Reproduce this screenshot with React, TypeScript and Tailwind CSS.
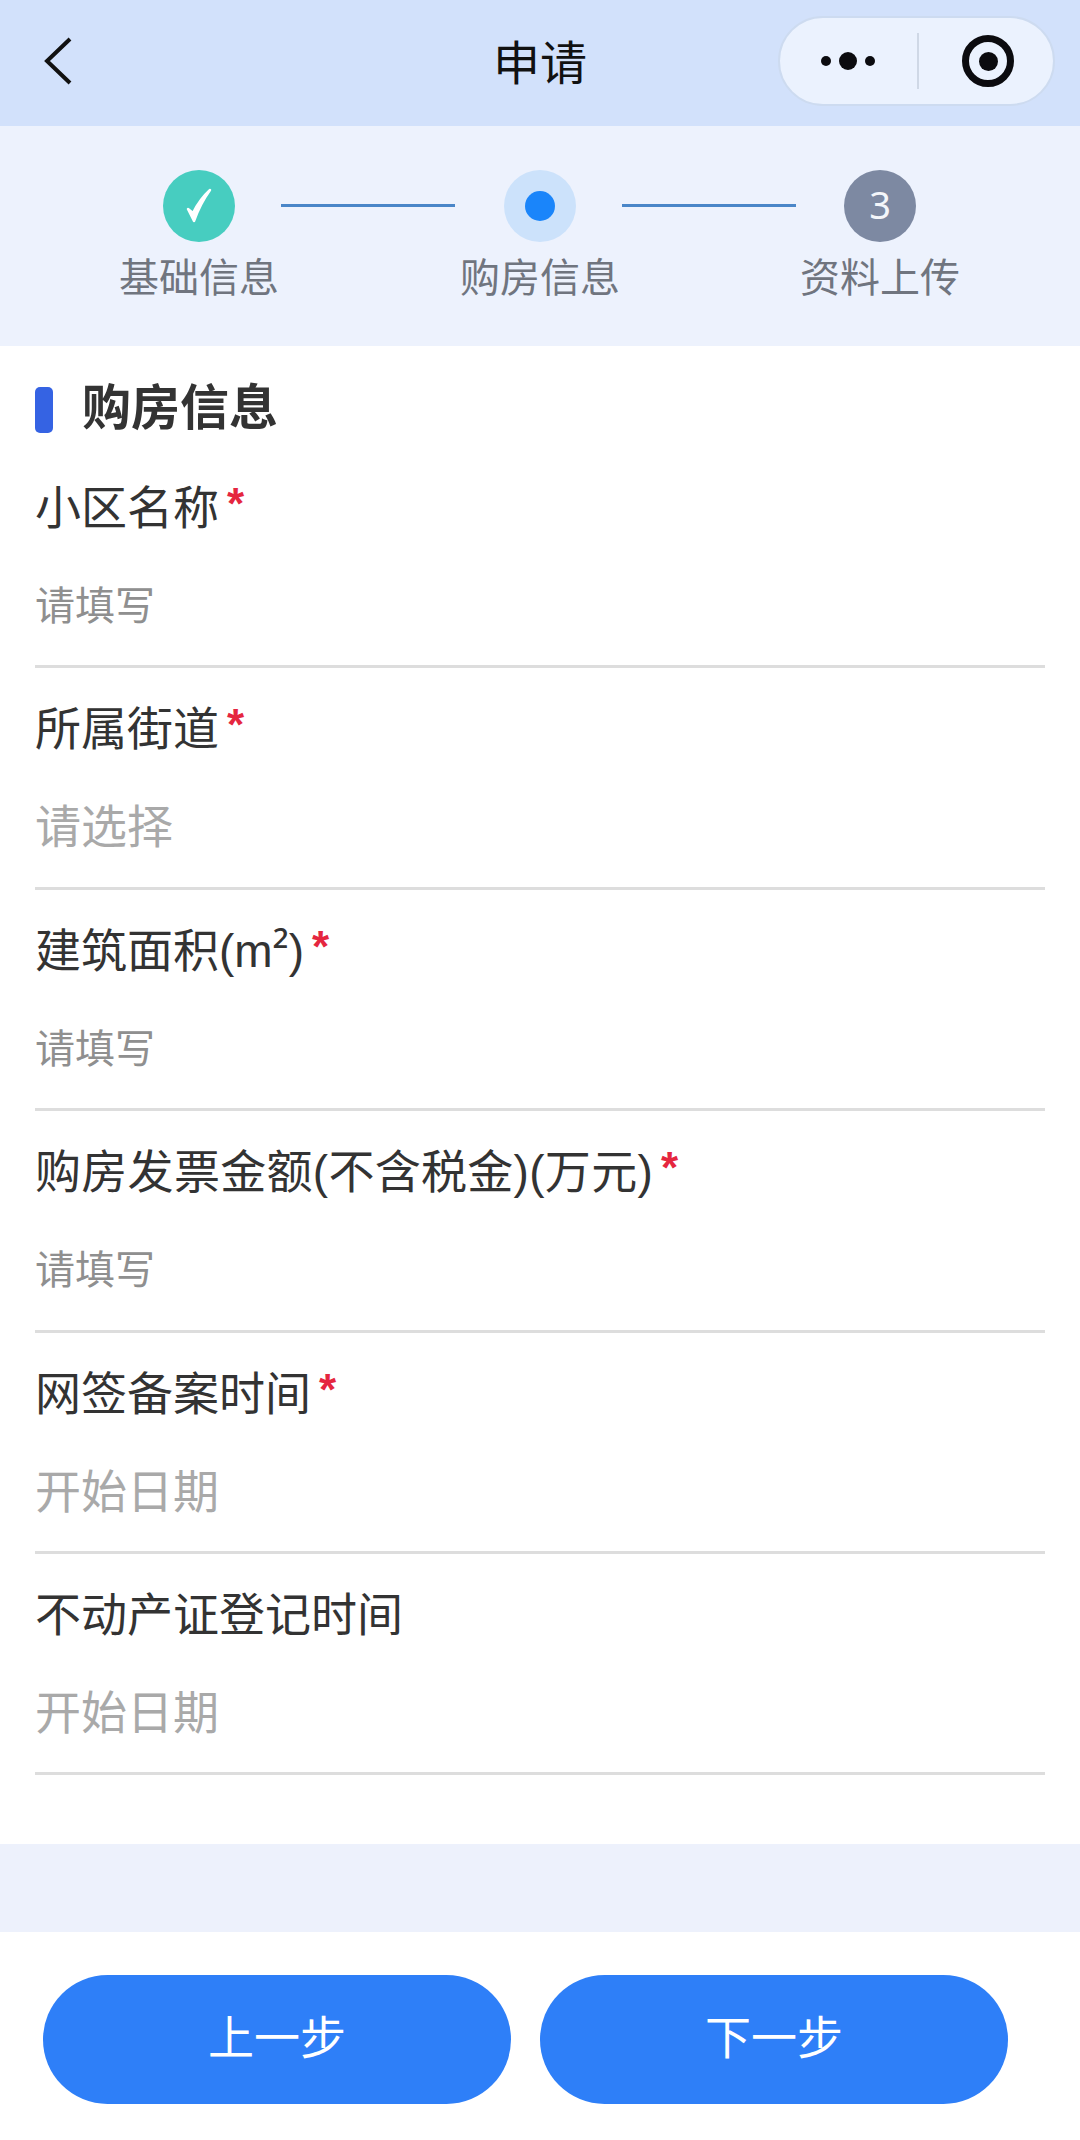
const font = "[font-family:'Liberation_Sans','Noto_Sans_CJK_SC',sans-serif]";

type Field = {
  label: React.ReactNode;
  required?: boolean;
  placeholder: string;
  small?: boolean;
  tracking?: string;
};

const fields: Field[] = [
  { label: "小区名称", required: true, placeholder: "请填写", small: true },
  { label: "所属街道", required: true, placeholder: "请选择" },
  {
    label: (
      <>
        建筑面积(m<span className="font-['Noto_Sans',sans-serif] text-[46px] leading-none">²</span>)
      </>
    ),
    required: true,
    placeholder: "请填写",
    small: true,
  },
  {
    label: "购房发票金额(不含税金)(万元)",
    required: true,
    placeholder: "请填写",
    small: true,
    tracking: "tracking-[0.3px]",
  },
  { label: "网签备案时间", required: true, placeholder: "开始日期" },
  { label: "不动产证登记时间", placeholder: "开始日期" },
];

const Header = () => (
  <header className="h-[126px] bg-[#d2e1fb] flex items-center pl-[44px] pb-[4px] shrink-0">
    <div className="w-[449px] shrink-0 flex items-center">
      <svg width="30" height="48" viewBox="0 0 30 48" fill="none">
        <path d="M26 2 L3 24 L26 46" stroke="#111" strokeWidth="4" />
      </svg>
    </div>
    <h1 className="text-[47px] leading-none text-[#111] mt-[4px]">申请</h1>
    <div className="ml-[191px] w-[277px] h-[90px] rounded-full bg-[#ebf2fe] border-2 border-[#cddbf0] flex items-center">
      <div className="w-[137px] flex items-center justify-center gap-[8px] pr-[2px]">
        <span className="w-[10px] h-[10px] rounded-full bg-[#0b0b0f]" />
        <span className="w-[18px] h-[18px] rounded-full bg-[#0b0b0f]" />
        <span className="w-[10px] h-[10px] rounded-full bg-[#0b0b0f]" />
      </div>
      <div className="w-[2px] h-[56px] bg-[#cfd8e6]" />
      <div className="flex-1 flex items-center justify-center pl-[4px]">
        <div className="w-[52px] h-[52px] rounded-full border-[7px] border-[#0b0b0f] flex items-center justify-center">
          <span className="w-[19px] h-[19px] rounded-full bg-[#0b0b0f]" />
        </div>
      </div>
    </div>
  </header>
);

const Step = ({ label, children, tone }: { label: string; children: React.ReactNode; tone: string }) => (
  <div className="w-[160px] shrink-0 flex flex-col items-center">
    <div className={`w-[72px] h-[72px] rounded-full flex items-center justify-center ${tone}`}>{children}</div>
    <span className="mt-[13px] text-[40px] leading-[46px] text-[#70757f] whitespace-nowrap">{label}</span>
  </div>
);

const Stepper = () => (
  <section className="h-[220px] bg-[#edf2fd] flex items-start pl-[119px] pt-[44px] shrink-0">
    <Step label="基础信息" tone="bg-[#47cdc0]">
      <svg width="34" height="36" viewBox="0 0 34 36" fill="none">
        <path d="M6 21 L12 33 Q18 16 28 2 Q18 11 11 25 Z" fill="#fff" stroke="#fff" strokeWidth="2.5" strokeLinejoin="round" />
      </svg>
    </Step>
    <div className="w-[174px] h-[3px] bg-[#4a86c8] ml-[2px] mr-[5px] mt-[34px] shrink-0" />
    <Step label="购房信息" tone="bg-[#cce2fb]">
      <span className="w-[30px] h-[30px] rounded-full bg-[#1a85fa]" />
    </Step>
    <div className="w-[174px] h-[3px] bg-[#4a86c8] ml-[2px] mr-[4px] mt-[34px] shrink-0" />
    <Step label="资料上传" tone="bg-[#7d89a2]">
      <span className="text-[38px] leading-none text-[#f4f6fa] font-['Noto_Sans',sans-serif] -mt-[5px]">3</span>
    </Step>
  </section>
);

const FormRow = ({ label, required, placeholder, small, tracking }: Field) => (
  <div className="h-[221.4px] border-b-[3px] border-[#dddddd] flex flex-col">
    <div className="h-[131px] pt-[29px] flex items-start">
      <span className={`text-[46px] leading-[64px] text-[#333] whitespace-nowrap ${tracking ?? ""}`}>{label}</span>
      {required && <span className="text-[44px] leading-[56px] text-[#e5263f] ml-[8px] font-bold font-['Liberation_Sans',sans-serif]">*</span>}
    </div>
    <div className="flex-1 flex items-start">
      {small ? (
        <span className="text-[40px] leading-[56px] text-[#8f8f8f]">{placeholder}</span>
      ) : (
        <span className="text-[46px] leading-[56px] text-[#a9a9a9]">{placeholder}</span>
      )}
    </div>
  </div>
);

const Footer = () => (
  <footer className="flex-1 bg-white flex gap-[29px] pl-[43px] pt-[43px]">
    <button className="w-[468px] h-[129px] rounded-full bg-[#2e7ff8] text-white text-[46px] leading-none pb-[4px]">上一步</button>
    <button className="w-[468px] h-[129px] rounded-full bg-[#2e7ff8] text-white text-[46px] leading-none pb-[4px]">下一步</button>
  </footer>
);

const App = () => {
  return (
    <div className={`w-[1080px] h-[2140px] flex flex-col bg-white overflow-hidden ${font}`}>
      <Header />
      <Stepper />
      <main className="h-[1498px] bg-white pl-[35px] pr-[35px] shrink-0 pb-[71px]">
        <div className="h-[101px] flex items-start pt-[41px]">
          <span className="w-[18px] h-[46px] rounded-[5px] bg-[#3563e3] shrink-0" />
          <h2 className="ml-[29px] -mt-[8px] text-[49px] leading-[58px] font-bold text-[#333]">购房信息</h2>
        </div>
        {fields.map((field, i) => (
          <FormRow key={i} {...field} />
        ))}
      </main>
      <div className="h-[88px] bg-[#edf1fc] shrink-0" />
      <Footer />
    </div>
  );
};

export default App;
